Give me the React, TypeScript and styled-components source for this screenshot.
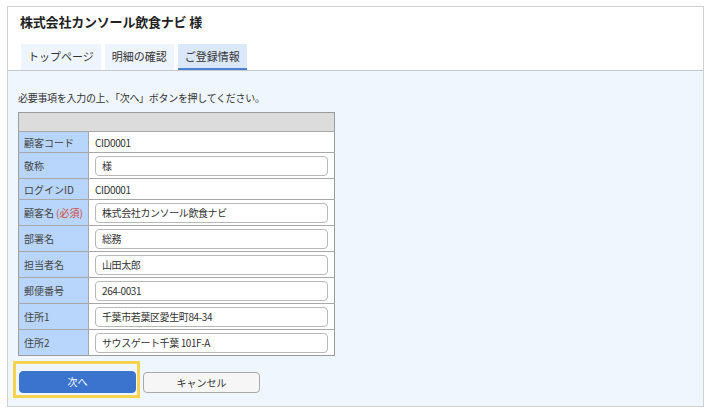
import React from "react";
import styled, { createGlobalStyle } from "styled-components";

const GlobalStyle = createGlobalStyle`
  body {
    margin: 0;
    background: #ffffff;
    font-family: "Noto Sans CJK JP", "Noto Sans", sans-serif;
    color: #333;
  }
`;

const Panel = styled.div`
  box-sizing: border-box;
  width: 697px;
  height: 401px;
  margin: 6px 0 0 7px;
  border: 1px solid #d0d0d0;
  display: flex;
  flex-direction: column;
`;

const Header = styled.div`
  background: #ffffff;
  padding: 5px 0 0 12px;
  border-bottom: 1px solid #c8c8c8;
`;

const Title = styled.h1`
  margin: 0;
  font-size: 13px;
  font-weight: 700;
  line-height: 20px;
  letter-spacing: -0.2px;
  color: #222;
`;

const Tabs = styled.div`
  display: flex;
  gap: 4px;
  margin-top: 12px;
  padding-left: 1px;
`;

const Tab = styled.div<{ active?: boolean }>`
  box-sizing: border-box;
  height: 26px;
  padding: 0 7px;
  display: flex;
  align-items: center;
  font-size: 11px;
  color: #333;
  background: ${({ active }) => (active ? "#dbe8fb" : "#eef5fe")};
  border-bottom: 2px solid
    ${({ active }) => (active ? "#4a80d6" : "transparent")};
`;

const Body = styled.div`
  flex: 1;
  background: #eff6fe;
  padding: 20px 0 0 10px;
`;

const Lead = styled.p`
  margin: 0;
  font-size: 10px;
  line-height: 14px;
  letter-spacing: -0.3px;
  color: #333;
`;

const FormTable = styled.table`
  margin-top: 7px;
  width: 317px;
  table-layout: fixed;
  border-collapse: collapse;
  border: 1px solid #9c9c9c;
  font-size: 10px;
  color: #333;
`;

const HeadCell = styled.th`
  height: 18px;
  padding: 0;
  background: #dcdcdc;
  border-bottom: 1px solid #a8a8a8;
`;

const Row = styled.tr<{ tall?: boolean }>`
  height: ${({ tall }) => (tall ? "26px" : "21px")};
  border-top: 1px solid #a8a8a8;
`;

const LabelCol = styled.col`
  width: 70px;
`;

const LabelCell = styled.td`
  padding: 0 0 0 5px;
  background: #b8d5fb;
  border-right: 1px solid #a8a8a8;
  color: #444;
  white-space: nowrap;
  overflow: hidden;
`;

const Required = styled.span`
  color: #d2473c;
  margin-left: 2px;
`;

const ValueCell = styled.td`
  padding: 0 6px 0 6px;
  background: #ffffff;
  letter-spacing: -0.4px;
`;

const Field = styled.input`
  box-sizing: border-box;
  display: block;
  width: 233px;
  height: 20px;
  padding: 0 6px;
  border: 1px solid #b8b8b8;
  border-radius: 4px;
  background: #fff;
  font-family: inherit;
  font-size: 10px;
  letter-spacing: -0.4px;
  color: #333;
`;

const Actions = styled.div`
  display: flex;
  align-items: flex-end;
  gap: 3px;
  margin-top: 5px;
  margin-left: -5px;
`;

const FocusFrame = styled.div`
  box-sizing: border-box;
  width: 127px;
  height: 37px;
  padding: 7px 3px 2px 3px;
  border: 3px solid #f5d24f;
`;

const Button = styled.button<{ primary?: boolean }>`
  box-sizing: border-box;
  display: block;
  width: 117px;
  height: ${({ primary }) => (primary ? "22px" : "21px")};
  margin-bottom: ${({ primary }) => (primary ? "0" : "5px")};
  padding: 0;
  border-radius: 4px;
  font-family: inherit;
  font-size: 10px;
  line-height: 1;
  cursor: pointer;
  color: ${({ primary }) => (primary ? "#ffffff" : "#333")};
  background: ${({ primary }) => (primary ? "#3b74cf" : "#f6f6f6")};
  border: 1px solid ${({ primary }) => (primary ? "#3b74cf" : "#a9a9a9")};
`;

const rows: { label: string; value: string; input?: boolean; required?: boolean }[] = [
  { label: "顧客コード", value: "CID0001" },
  { label: "敬称", value: "様", input: true },
  { label: "ログインID", value: "CID0001" },
  { label: "顧客名", value: "株式会社カンソール飲食ナビ", input: true, required: true },
  { label: "部署名", value: "総務", input: true },
  { label: "担当者名", value: "山田太郎", input: true },
  { label: "郵便番号", value: "264-0031", input: true },
  { label: "住所1", value: "千葉市若葉区愛生町84-34", input: true },
  { label: "住所2", value: "サウスゲート千葉 101F-A", input: true },
];

const App: React.FC = () => {
  return (
    <>
      <GlobalStyle />
      <Panel>
        <Header>
          <Title>株式会社カンソール飲食ナビ 様</Title>
          <Tabs>
            <Tab>トップページ</Tab>
            <Tab>明細の確認</Tab>
            <Tab active>ご登録情報</Tab>
          </Tabs>
        </Header>
        <Body>
          <Lead>必要事項を入力の上、「次へ」ボタンを押してください。</Lead>
          <FormTable>
            <colgroup>
              <LabelCol />
              <col />
            </colgroup>
            <thead>
              <tr>
                <HeadCell colSpan={2} />
              </tr>
            </thead>
            <tbody>
              {rows.map((row) => (
                <Row key={row.label} tall={row.input}>
                  <LabelCell>
                    {row.label}
                    {row.required && <Required>(必須)</Required>}
                  </LabelCell>
                  <ValueCell>
                    {row.input ? (
                      <Field defaultValue={row.value} />
                    ) : (
                      row.value
                    )}
                  </ValueCell>
                </Row>
              ))}
            </tbody>
          </FormTable>
          <Actions>
            <FocusFrame>
              <Button primary type="button">
                次へ
              </Button>
            </FocusFrame>
            <Button type="button">キャンセル</Button>
          </Actions>
        </Body>
      </Panel>
    </>
  );
};

export default App;
